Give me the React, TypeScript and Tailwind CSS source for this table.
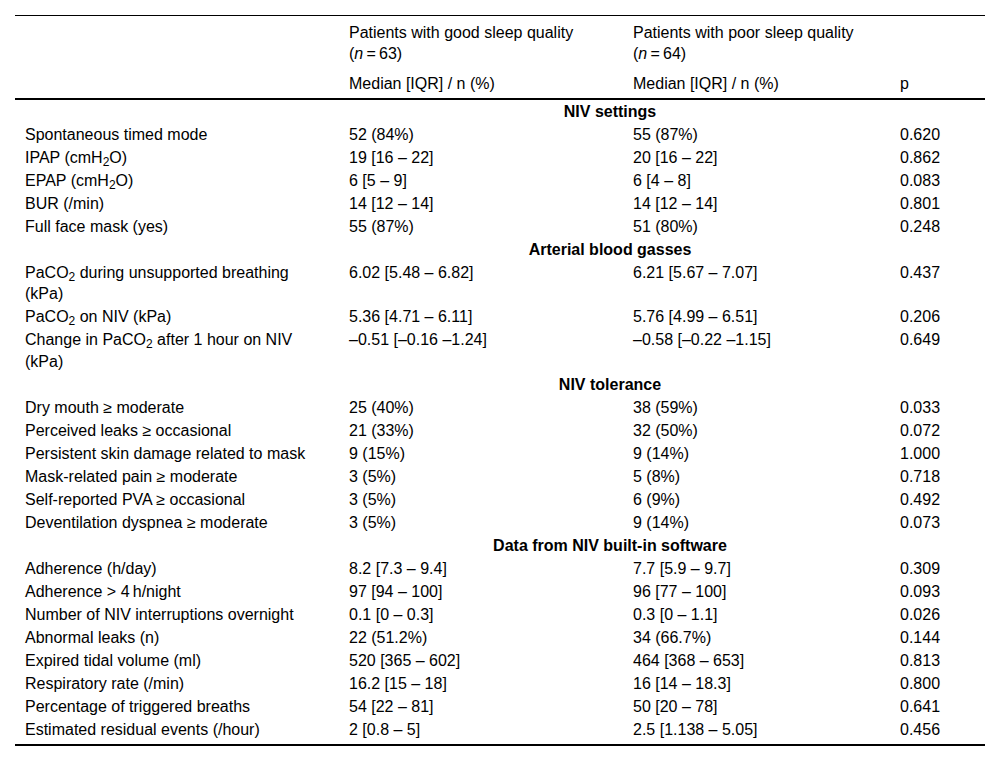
import type { ReactNode } from 'react';

type Row = {
  label: ReactNode;
  good: string;
  poor: string;
  p: string;
};

type Section = {
  title: string;
  rows: Row[];
};

const Sub = ({ children }: { children: ReactNode }) => <sub>{children}</sub>;

const sections: Section[] = [
  {
    title: 'NIV settings',
    rows: [
      { label: 'Spontaneous timed mode', good: '52 (84%)', poor: '55 (87%)', p: '0.620' },
      { label: <>IPAP (cmH<Sub>2</Sub>O)</>, good: '19 [16 – 22]', poor: '20 [16 – 22]', p: '0.862' },
      { label: <>EPAP (cmH<Sub>2</Sub>O)</>, good: '6 [5 – 9]', poor: '6 [4 – 8]', p: '0.083' },
      { label: 'BUR (/min)', good: '14 [12 – 14]', poor: '14 [12 – 14]', p: '0.801' },
      { label: 'Full face mask (yes)', good: '55 (87%)', poor: '51 (80%)', p: '0.248' },
    ],
  },
  {
    title: 'Arterial blood gasses',
    rows: [
      {
        label: <>PaCO<Sub>2</Sub> during unsupported breathing (kPa)</>,
        good: '6.02 [5.48 – 6.82]',
        poor: '6.21 [5.67 – 7.07]',
        p: '0.437',
      },
      { label: <>PaCO<Sub>2</Sub> on NIV (kPa)</>, good: '5.36 [4.71 – 6.11]', poor: '5.76 [4.99 – 6.51]', p: '0.206' },
      {
        label: <>Change in PaCO<Sub>2</Sub> after 1 hour on NIV (kPa)</>,
        good: '–0.51 [–0.16 –1.24]',
        poor: '–0.58 [–0.22 –1.15]',
        p: '0.649',
      },
    ],
  },
  {
    title: 'NIV tolerance',
    rows: [
      { label: 'Dry mouth ≥ moderate', good: '25 (40%)', poor: '38 (59%)', p: '0.033' },
      { label: 'Perceived leaks ≥ occasional', good: '21 (33%)', poor: '32 (50%)', p: '0.072' },
      { label: 'Persistent skin damage related to mask', good: '9 (15%)', poor: '9 (14%)', p: '1.000' },
      { label: 'Mask-related pain ≥ moderate', good: '3 (5%)', poor: '5 (8%)', p: '0.718' },
      { label: 'Self-reported PVA ≥ occasional', good: '3 (5%)', poor: '6 (9%)', p: '0.492' },
      { label: 'Deventilation dyspnea ≥ moderate', good: '3 (5%)', poor: '9 (14%)', p: '0.073' },
    ],
  },
  {
    title: 'Data from NIV built-in software',
    rows: [
      { label: 'Adherence (h/day)', good: '8.2 [7.3 – 9.4]', poor: '7.7 [5.9 – 9.7]', p: '0.309' },
      { label: 'Adherence > 4\u2009h/night', good: '97 [94 – 100]', poor: '96 [77 – 100]', p: '0.093' },
      { label: 'Number of NIV interruptions overnight', good: '0.1 [0 – 0.3]', poor: '0.3 [0 – 1.1]', p: '0.026' },
      { label: 'Abnormal leaks (n)', good: '22 (51.2%)', poor: '34 (66.7%)', p: '0.144' },
      { label: 'Expired tidal volume (ml)', good: '520 [365 – 602]', poor: '464 [368 – 653]', p: '0.813' },
      { label: 'Respiratory rate (/min)', good: '16.2 [15 – 18]', poor: '16 [14 – 18.3]', p: '0.800' },
      { label: 'Percentage of triggered breaths', good: '54 [22 – 81]', poor: '50 [20 – 78]', p: '0.641' },
      { label: 'Estimated residual events (/hour)', good: '2 [0.8 – 5]', poor: '2.5 [1.138 – 5.05]', p: '0.456' },
    ],
  },
];

export default function App() {
  return (
    <div className="min-h-[762px] w-[1000px] bg-white pt-[15px] text-black font-['Liberation_Sans',Arial,sans-serif] text-[16px] leading-[21.5px]">
      <table className="ml-[15px] w-[970px] table-fixed border-collapse">
        <colgroup>
          <col className="w-[324px]" />
          <col className="w-[284px]" />
          <col className="w-[267px]" />
          <col className="w-[95px]" />
        </colgroup>
        <thead className="leading-[21px]">
          <tr className="border-t border-black">
            <th />
            <th className="px-[10px] pt-[6px] text-left align-top font-normal">
              Patients with good sleep quality
              <br />
              (<i>n</i>{'\u2009=\u2009'}63)
            </th>
            <th className="px-[10px] pt-[6px] text-left align-top font-normal">
              Patients with poor sleep quality
              <br />
              (<i>n</i>{'\u2009=\u2009'}64)
            </th>
            <th />
          </tr>
          <tr className="border-b-2 border-black">
            <th />
            <th className="px-[10px] pt-[8.5px] pb-[4.5px] text-left font-normal">Median [IQR] / n (%)</th>
            <th className="px-[10px] pt-[8.5px] pb-[4.5px] text-left font-normal">Median [IQR] / n (%)</th>
            <th className="px-[10px] pt-[8.5px] pb-[4.5px] text-left font-normal">p</th>
          </tr>
        </thead>
        <tbody>
          {sections.map((section, si) => (
            <SectionRows key={si} section={section} />
          ))}
          <tr className="border-b-2 border-black">
            <td colSpan={4} className="h-[4px] p-0 text-[0px] leading-[0px]" />
          </tr>
        </tbody>
      </table>
    </div>
  );
}

function SectionRows({ section }: { section: Section }) {
  return (
    <>
      <tr>
        <td colSpan={4} className="py-[0.75px] pl-[220px] text-center font-bold">
          {section.title}
        </td>
      </tr>
      {section.rows.map((row, ri) => (
        <tr key={ri}>
          <td className="px-[10px] py-[0.75px] align-top">{row.label}</td>
          <td className="px-[10px] py-[0.75px] align-top">{row.good}</td>
          <td className="px-[10px] py-[0.75px] align-top">{row.poor}</td>
          <td className="px-[10px] py-[0.75px] align-top">{row.p}</td>
        </tr>
      ))}
    </>
  );
}
